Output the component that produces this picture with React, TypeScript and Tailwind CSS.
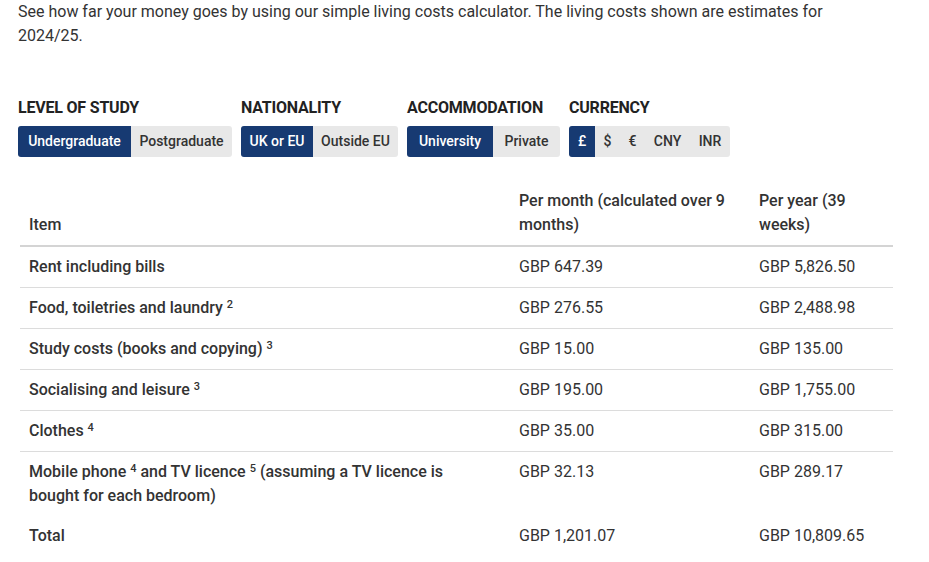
import { useState } from "react";

type Opt = { label: string; value: string; w: string };

const GROUPS: { key: string; title: string; options: Opt[] }[] = [
  {
    key: "level",
    title: "Level of study",
    options: [
      { label: "Undergraduate", value: "ug", w: "w-[113px]" },
      { label: "Postgraduate", value: "pg", w: "w-[101px]" },
    ],
  },
  {
    key: "nationality",
    title: "Nationality",
    options: [
      { label: "UK or EU", value: "uk", w: "w-[72px]" },
      { label: "Outside EU", value: "int", w: "w-[85px]" },
    ],
  },
  {
    key: "accommodation",
    title: "Accommodation",
    options: [
      { label: "University", value: "uni", w: "w-[86px]" },
      { label: "Private", value: "private", w: "w-[67px]" },
    ],
  },
  {
    key: "currency",
    title: "Currency",
    options: [
      { label: "£", value: "GBP", w: "w-[26px]" },
      { label: "$", value: "USD", w: "w-[25px]" },
      { label: "€", value: "EUR", w: "w-[25px]" },
      { label: "CNY", value: "CNY", w: "w-[45px]" },
      { label: "INR", value: "INR", w: "w-[40px]" },
    ],
  },
];

const Note = ({ n }: { n: number }) => <sup className="text-[11px] leading-none">{n}</sup>;

const ROWS: { item: React.ReactNode; month: string; year: string }[] = [
  { item: "Rent including bills", month: "GBP 647.39", year: "GBP 5,826.50" },
  {
    item: (
      <>
        Food, toiletries and laundry <Note n={2} />
      </>
    ),
    month: "GBP 276.55",
    year: "GBP 2,488.98",
  },
  {
    item: (
      <>
        Study costs (books and copying) <Note n={3} />
      </>
    ),
    month: "GBP 15.00",
    year: "GBP 135.00",
  },
  {
    item: (
      <>
        Socialising and leisure <Note n={3} />
      </>
    ),
    month: "GBP 195.00",
    year: "GBP 1,755.00",
  },
  {
    item: (
      <>
        Clothes <Note n={4} />
      </>
    ),
    month: "GBP 35.00",
    year: "GBP 315.00",
  },
  {
    item: (
      <>
        Mobile phone <Note n={4} /> and TV licence <Note n={5} /> (assuming a TV licence is bought for each bedroom)
      </>
    ),
    month: "GBP 32.13",
    year: "GBP 289.17",
  },
];

export default function App() {
  const [sel, setSel] = useState<Record<string, string>>({
    level: "ug",
    nationality: "uk",
    accommodation: "uni",
    currency: "GBP",
  });

  return (
    <div className="min-h-screen bg-white text-[#333] font-['Roboto',sans-serif]">
      <div className="px-[18px]">
        <p className="text-[16px] leading-6 max-w-[830px]">
          See how far your money goes by using our simple living costs calculator. The living costs shown are estimates for 2024/25.
        </p>

        <div className="mt-12 flex gap-[9px]">
          {GROUPS.map((g) => (
            <div key={g.key}>
              <div className="text-[16px] leading-6 font-bold uppercase text-[#222] tracking-[-0.2px]">{g.title}</div>
              <div className="mt-[6px] flex rounded-[3px] overflow-hidden bg-[#e8e8e8]">
                {g.options.map((o) => {
                  const active = sel[g.key] === o.value;
                  return (
                    <button
                      key={o.value}
                      onClick={() => setSel((p) => ({ ...p, [g.key]: o.value }))}
                      className={
                        "h-[31px] text-center text-[14px] font-medium " +
                        o.w +
                        " " +
                        (active ? "bg-[#173a72] text-white" : "text-[#333]")
                      }
                    >
                      {o.label}
                    </button>
                  );
                })}
              </div>
            </div>
          ))}
        </div>
      </div>

      <div className="mt-[22px] pl-5 w-[893px]">
        <table className="w-full text-[16px] leading-6 border-collapse">
          <thead>
            <tr className="border-b-2 border-[#d4d4d4] align-bottom">
              <th className="text-left font-medium pt-[10px] pb-[8px] px-[9px] w-[490px]">Item</th>
              <th className="text-left font-medium pt-[10px] pb-[8px] px-[9px] w-[240px]">Per month (calculated over 9 months)</th>
              <th className="text-left font-medium pt-[10px] pb-[8px] px-[9px]">Per year (39 weeks)</th>
            </tr>
          </thead>
          <tbody>
            {ROWS.map((r, i) => (
              <tr key={i} className={i < ROWS.length - 1 ? "border-b border-[#dcdcdc] align-top" : "align-top"}>
                <td className="py-2 pl-[9px] pr-[50px] font-medium">{r.item}</td>
                <td className="py-2 px-[9px]">{r.month}</td>
                <td className="py-2 px-[9px]">{r.year}</td>
              </tr>
            ))}
            <tr className="align-top">
              <td className="py-2 px-[9px] font-medium">Total</td>
              <td className="py-2 px-[9px]">GBP 1,201.07</td>
              <td className="py-2 px-[9px]">GBP 10,809.65</td>
            </tr>
          </tbody>
        </table>
      </div>
    </div>
  );
}
